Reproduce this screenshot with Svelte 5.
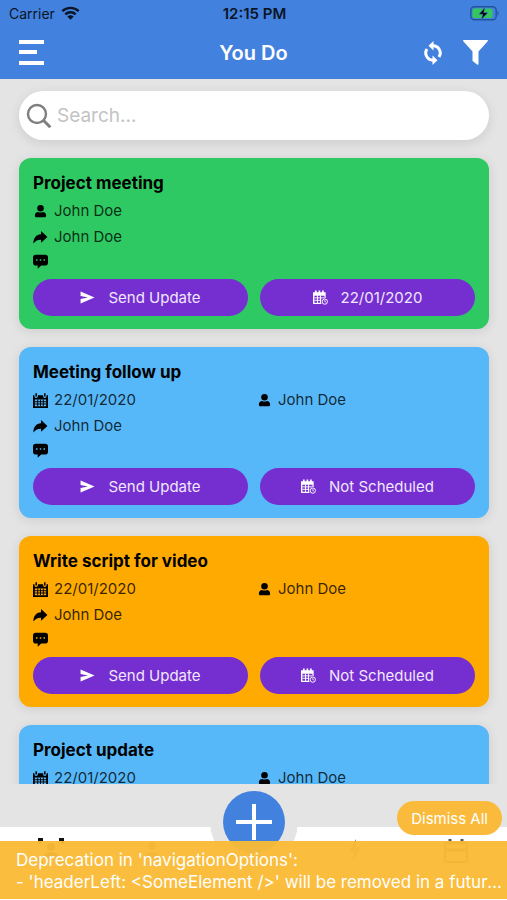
<script lang="ts">
	type Task = {
		title: string;
		color: string;
		date?: string;
		owner: string;
		delegate: string;
		schedule: string;
	};

	const tasks: Task[] = [
		{
			title: 'Project meeting',
			color: '#2ec963',
			owner: 'John Doe',
			delegate: 'John Doe',
			schedule: '22/01/2020'
		},
		{
			title: 'Meeting follow up',
			color: '#57b8f9',
			date: '22/01/2020',
			owner: 'John Doe',
			delegate: 'John Doe',
			schedule: 'Not Scheduled'
		},
		{
			title: 'Write script for video',
			color: '#ffaa00',
			date: '22/01/2020',
			owner: 'John Doe',
			delegate: 'John Doe',
			schedule: 'Not Scheduled'
		},
		{
			title: 'Project update',
			color: '#57b8f9',
			date: '22/01/2020',
			owner: 'John Doe',
			delegate: 'John Doe',
			schedule: 'Not Scheduled'
		}
	];

	let search = $state('');
	let showWarning = $state(true);

	const visible = $derived(
		tasks.filter((t) => t.title.toLowerCase().includes(search.toLowerCase()))
	);
</script>

{#snippet calendar()}
	<svg class="icon" viewBox="0 0 16 16" aria-hidden="true">
		<path
			fill="currentColor"
			fill-rule="evenodd"
			d="M0 2.5h1.6v1a1.8 1.8 0 0 0 3.6 0v-1h5.6v1a1.8 1.8 0 0 0 3.6 0v-1H16V16H0zM2 7v7h12V7z"
		/>
		<path fill="currentColor" d="M2.6.3h1.6v3.5H2.6zM11.8.3h1.6v3.5h-1.6z" />
		<path stroke="currentColor" d="M2 9.3h12M2 11.7h12M5 7v7M8 7v7M11 7v7" />
	</svg>
{/snippet}

{#snippet calendarClock()}
	<svg class="icon" viewBox="0 0 16 16" aria-hidden="true">
		<path
			fill="currentColor"
			fill-rule="evenodd"
			d="M0 2.5h13.5v6.1h-1.3V6H1.5v7.5H9V15H.6L0 14.4z"
		/>
		<path stroke="currentColor" stroke-width="1.8" d="M3 .4v3M6.8.4v3M10.6.4v3" />
		<path stroke="currentColor" d="M1.5 8.4H12M1.5 11H9M4.8 6v8M8 6v8" />
		<circle cx="12.6" cy="12.4" r="2.8" fill="none" stroke="currentColor" />
		<path fill="none" stroke="currentColor" stroke-width=".8" d="M12.6 10.8v1.8h1.3" />
	</svg>
{/snippet}

{#snippet person()}
	<svg class="icon" viewBox="0 0 16 16" aria-hidden="true">
		<circle cx="8" cy="4.6" r="3.5" fill="currentColor" />
		<path
			fill="currentColor"
			d="M2 12.2c0-2.4 1.6-3.8 3.4-3.8 1.6.9 3.6.9 5.2 0 1.9 0 3.4 1.4 3.4 3.8 0 1.2-.5 1.9-1.4 1.9H3.4c-.9 0-1.4-.7-1.4-1.9z"
		/>
	</svg>
{/snippet}

{#snippet share()}
	<svg class="icon" viewBox="0 0 16 16" aria-hidden="true">
		<path
			fill="currentColor"
			d="M8.6 1 15.4 7.4l-6.8 6.2V10.3C5.2 10.2 3.2 11 .4 14.4.4 8.5 3.3 4.8 8.6 4.5z"
		/>
	</svg>
{/snippet}

{#snippet comment()}
	<svg class="icon" viewBox="0 0 16 16" aria-hidden="true">
		<path
			fill="currentColor"
			fill-rule="evenodd"
			d="M3 .7h10a3 3 0 0 1 3 3v5.6a3 3 0 0 1-3 3H8.8L5 15.6v-3.3H3a3 3 0 0 1-3-3V3.7a3 3 0 0 1 3-3zM3.2 5.7v1.6h1.6V5.7zM7.2 5.7v1.6h1.6V5.7zM11.2 5.7v1.6h1.6V5.7z"
		/>
	</svg>
{/snippet}

<div class="app">
	<header>
		<div class="status">
			<span class="carrier">
				Carrier
				<svg width="19" height="14" viewBox="0 0 19 14" aria-hidden="true">
					<g fill="none" stroke="currentColor" stroke-width="2.4">
						<path d="M1.3 5.2a11.7 11.7 0 0 1 16.4 0" />
						<path d="M4.3 8.4a7.4 7.4 0 0 1 10.4 0" />
					</g>
					<path fill="currentColor" d="M9.5 13.8 6.3 10.5a4.6 4.6 0 0 1 6.4 0z" />
				</svg>
			</span>
			<span class="time">12:15 PM</span>
			<svg class="battery" width="30" height="15" viewBox="0 0 30 15" aria-hidden="true">
				<rect
					x=".8"
					y=".8"
					width="25.4"
					height="13"
					rx="3.5"
					fill="none"
					stroke="#22549a"
					stroke-width="1.4"
				/>
				<rect x="2.5" y="2.5" width="20" height="9.6" rx="2" fill="#34c75c" />
				<path d="M27.5 5v4.6c1.6-.6 1.6-4 0-4.6z" fill="#22549a" />
				<path
					d="M15.2 1.3 8.8 8.2h4l-1.6 5.5 6.8-7.2h-4.3z"
					fill="#000"
					stroke="#4381de"
					stroke-width=".6"
				/>
			</svg>
		</div>
		<div class="nav">
			<button aria-label="Menu">
				<svg width="25" height="25" viewBox="0 0 25 25" fill="currentColor">
					<path d="M0 0h25v4H0zM0 10h18v4H0zM0 21h25v4H0z" />
				</svg>
			</button>
			<h1>You Do</h1>
			<div class="actions">
				<button aria-label="Refresh">
					<svg width="20" height="24" viewBox="0 0 20 24">
						<g fill="none" stroke="currentColor" stroke-width="3">
							<path d="M10 4.8a7.2 7.2 0 0 1 6 11.2" />
							<path d="M10 19.2A7.2 7.2 0 0 1 4 8" />
						</g>
						<path fill="currentColor" d="M10.5 0v9.6l-5-4.8zM9.5 24v-9.6l5 4.8z" />
					</svg>
				</button>
				<button aria-label="Filter">
					<svg width="25" height="25" viewBox="0 0 25 25" fill="currentColor">
						<path
							d="M.8 0h23.4c.8 0 1 .7.5 1.3L15.5 11.5v12.3c0 .9-.7 1.2-1.4.7l-4.2-3.2c-.3-.3-.4-.5-.4-.9v-8.9L.3 1.3C-.2.7 0 0 .8 0z"
						/>
					</svg>
				</button>
			</div>
		</div>
	</header>

	<main>
		<label class="search">
			<svg
				width="26"
				height="26"
				viewBox="0 0 26 26"
				fill="none"
				stroke="#7f7f7f"
				aria-hidden="true"
			>
				<circle cx="11" cy="11" r="9" stroke-width="2.4" />
				<path d="m17.3 17.3 7 7" stroke-width="3" />
			</svg>
			<input type="text" placeholder="Search..." aria-label="Search" bind:value={search} />
		</label>

		{#each visible as task (task.title)}
			<article class="card" style:background={task.color}>
				<h2>{task.title}</h2>
				<div class="meta">
					{#if task.date}
						<span>{@render calendar()}{task.date}</span>
					{/if}
					<span>{@render person()}{task.owner}</span>
				</div>
				<div class="meta">
					<span>{@render share()}{task.delegate}</span>
				</div>
				<div class="meta comments">
					<span>{@render comment()}</span>
				</div>
				<div class="buttons">
					<button>
						<svg class="icon" viewBox="0 0 16 16" aria-hidden="true">
							<path fill="currentColor" d="M.6 1.5 15.5 8 .6 14.5V9.6L8.5 8 .6 6.4z" />
						</svg>
						Send Update
					</button>
					<button>{@render calendarClock()}{task.schedule}</button>
				</div>
			</article>
		{/each}
	</main>

	<footer>
		<nav class="tabs">
			<button aria-label="You do">
				<svg width="26" height="26" viewBox="0 0 26 26" fill="none" stroke="#111" stroke-width="3">
					<path d="M1.5 6V1.5H5M21 1.5h3.5V6M24.5 20v4.5H21M5 24.5H1.5V20" />
					<circle cx="13" cy="9" r="4" fill="#222" stroke="none" />
					<path d="M5 20c1-8 15-8 16 0z" fill="#222" stroke="none" />
				</svg>
			</button>
			<button aria-label="They do">
				<svg width="24" height="26" viewBox="0 0 24 26" fill="#777">
					<circle cx="12" cy="8" r="4" />
					<path d="M4 21c1-9 15-9 16 0z" />
				</svg>
			</button>
			<span></span>
			<button aria-label="Activity">
				<svg width="16" height="26" viewBox="0 0 16 26" fill="#777">
					<path d="M9 1 2 14h5l-1 9 8-14H9z" />
				</svg>
			</button>
			<button aria-label="Calendar">
				<svg width="24" height="26" viewBox="0 0 24 26" fill="none" stroke="#555" stroke-width="2">
					<rect x="1" y="5" width="22" height="19" rx="2" />
					<path d="M6 1v6M18 1v6M1 12h22" stroke-width="3" />
				</svg>
			</button>
		</nav>
		<div class="fab">
			<button aria-label="Add task">
				<svg width="36" height="36" viewBox="0 0 36 36" stroke="currentColor" stroke-width="4">
					<path d="M18 0v36M0 18h36" />
				</svg>
			</button>
		</div>
		{#if showWarning}
			<div class="warning">
				<button onclick={() => (showWarning = false)}>Dismiss All</button>
				<div class="message" role="alert">
					<p>Deprecation in 'navigationOptions':</p>
					<p>- 'headerLeft: &lt;SomeElement /&gt;' will be removed in a future version</p>
				</div>
			</div>
		{/if}
	</footer>
</div>

<style>
	:global(body) {
		background: #e4e4e4;
	}

	.app {
		display: flex;
		flex-direction: column;
		height: 100vh;
		overflow: hidden;
		background: #e4e4e4;
		color: #000;
		font-family: Inter, 'Liberation Sans', sans-serif;
		font-size: 15px;
	}

	button {
		padding: 0;
		border: none;
		background: none;
		color: #fff;
		font: inherit;
		cursor: pointer;
	}

	svg {
		display: block;
		flex: none;
	}

	header {
		background: #4381de;
	}

	.status,
	.nav {
		display: grid;
		grid-template-columns: 1fr auto 1fr;
		align-items: center;
	}

	.status {
		height: 26px;
		padding: 0 7px 0 9px;
		color: #0a1526;
	}

	.carrier {
		display: flex;
		align-items: center;
		gap: 6px;
		font-size: 14px;
	}

	.time {
		font-weight: 600;
	}

	.battery {
		justify-self: end;
	}

	.nav {
		height: 53px;
		padding: 0 19px;
		color: #fff;
	}

	.nav > button {
		justify-self: start;
	}

	h1 {
		margin: 0;
		font-size: 20px;
		font-weight: 600;
	}

	.actions {
		display: flex;
		align-items: center;
		justify-content: flex-end;
		gap: 20px;
	}

	main {
		display: flex;
		flex: 1;
		flex-direction: column;
		gap: 18px;
		min-height: 0;
		padding: 12px 18px 0 19px;
		overflow: hidden;
	}

	.search {
		display: flex;
		flex: none;
		align-items: center;
		gap: 5px;
		height: 49px;
		padding: 0 20px 0 7px;
		box-sizing: border-box;
		border-radius: 25px;
		background: #fff;
		box-shadow: 0 3px 12px rgba(0, 0, 0, 0.1);
	}

	.search input {
		flex: 1;
		min-width: 0;
		padding: 0;
		border: none;
		outline: none;
		background: transparent;
		font: inherit;
		font-size: 19px;
	}

	.search input::placeholder {
		color: #c3c3c3;
		opacity: 1;
	}

	.card {
		flex: none;
		padding: 12px 14px 13px;
		border-radius: 12px;
		box-shadow: 0 2px 12px rgba(0, 0, 0, 0.1);
	}

	h2 {
		margin: 0 0 2px;
		font-size: 17px;
		font-weight: 700;
		line-height: 26px;
	}

	.meta {
		display: grid;
		grid-template-columns: 1fr 1fr;
		gap: 6px;
		line-height: 26px;
		color: rgba(0, 0, 0, 0.8);
	}

	.meta span {
		display: flex;
		align-items: center;
		gap: 6px;
	}

	.comments {
		height: 22px;
		margin-bottom: 7px;
	}

	.icon {
		width: 15px;
		height: 15px;
		color: #000;
	}

	.buttons {
		display: grid;
		grid-template-columns: 1fr 1fr;
		gap: 12px;
	}

	.buttons button {
		display: flex;
		align-items: center;
		justify-content: center;
		gap: 13px;
		height: 37px;
		border-radius: 19px;
		background: #752fd0;
		color: #f1e6ff;
	}

	.buttons .icon {
		color: #fff;
	}

	footer {
		position: relative;
		flex: none;
		padding-top: 43px;
	}

	.tabs {
		display: grid;
		grid-template-columns: repeat(5, 1fr);
		height: 73px;
		padding-top: 11px;
		box-sizing: border-box;
		background: #fff;
	}

	.tabs button {
		display: flex;
		justify-content: center;
	}

	/* the ring around the button cuts a notch in the tab bar only */
	.fab {
		position: absolute;
		top: -6px;
		left: 50%;
		display: grid;
		place-items: center;
		width: 88px;
		height: 88px;
		border-radius: 50%;
		background: #e4e4e4;
		clip-path: inset(8px 0 0);
		transform: translateX(-50%);
	}

	.fab button {
		display: grid;
		place-items: center;
		width: 62px;
		height: 62px;
		border-radius: 50%;
		background: #4381de;
	}

	.warning {
		position: absolute;
		right: 0;
		bottom: 1px;
		left: 0;
		display: flex;
		flex-direction: column;
		color: #fff;
	}

	.warning button {
		align-self: flex-end;
		height: 34px;
		margin: 0 5px 6px;
		padding: 0 14px;
		border-radius: 17px;
		background: #fabb3c;
	}

	.message {
		height: 58px;
		padding: 8px 4px 6px 16px;
		box-sizing: border-box;
		background: rgba(250, 186, 53, 0.96);
		font-size: 17px;
		line-height: 22px;
	}

	.message p {
		margin: 0;
		overflow: hidden;
		text-overflow: ellipsis;
		white-space: nowrap;
	}
</style>
